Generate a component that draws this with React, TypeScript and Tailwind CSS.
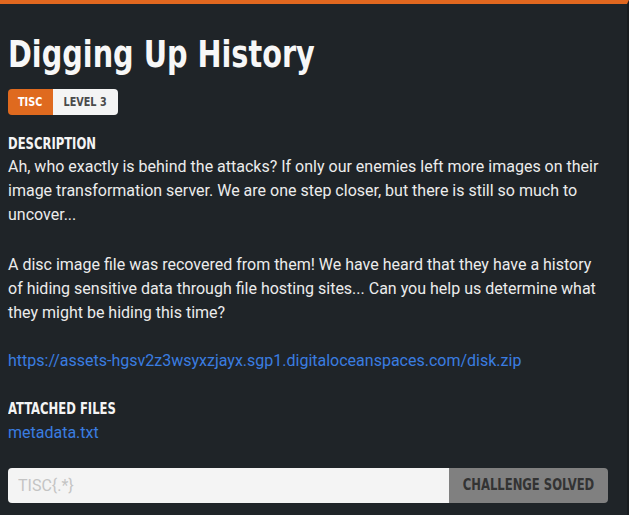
import React from "react";

const heading = "font-['DejaVu_Sans_Condensed','Liberation_Sans',sans-serif]";

// squeeze DejaVu Condensed a little so it reads like the site's narrow display face
const Narrow: React.FC<{ children: React.ReactNode; origin?: string }> = ({ children, origin = "origin-left" }) => (
  <span className={`inline-block ${origin} scale-x-[0.86] whitespace-nowrap`}>{children}</span>
);

const App: React.FC = () => {
  return (
    <div className="min-h-[515px] w-full bg-[#1f2428] border-t-4 border-[#e0671f] border-r-2 border-r-[#181c1f] text-[#f1f1f1] font-['Roboto',sans-serif]">
      <div className="w-[608px] pl-2 pt-[26px]">
        <h1 className={`${heading} text-[38px] leading-[48px] font-bold text-[#f7f7f7]`}>
          <span className="inline-block origin-left scale-x-[0.84] whitespace-nowrap">Digging Up History</span>
        </h1>
        <div className={`${heading} mt-[11px] inline-flex h-[26px] rounded overflow-hidden text-[12.5px] font-bold`}>
          <span className="flex w-[45px] items-center justify-center bg-[#df6a1f] text-white">
            <Narrow origin="origin-center">TISC</Narrow>
          </span>
          <span className="flex w-[65px] items-center justify-center bg-[#f4f4f4] text-[#4a4a4a]">
            <Narrow origin="origin-center">LEVEL 3</Narrow>
          </span>
        </div>

        <div className={`${heading} mt-[19px] text-[15px] leading-[21px] font-bold text-[#f4f4f4]`}>
          <Narrow>DESCRIPTION</Narrow>
        </div>
        <div className="text-[16px] leading-[24px] text-[#ececec]">
          <p>
            Ah, who exactly is behind the attacks? If only our enemies left more images on their image
            transformation server. We are one step closer, but there is still so much to uncover...
          </p>
          <p className="mt-[26px]">
            A disc image file was recovered from them! We have heard that they have a history of hiding
            sensitive data through file hosting sites... Can you help us determine what they might be
            hiding this time?
          </p>
          <p className="mt-6">
            <a className="text-[#3a7de0]" href="#">
              https://assets-hgsv2z3wsyxzjayx.sgp1.digitaloceanspaces.com/disk.zip
            </a>
          </p>
        </div>

        <div className={`${heading} mt-[25px] text-[15px] leading-[23px] font-bold text-[#f4f4f4]`}>
          <Narrow>ATTACHED FILES</Narrow>
        </div>
        <a className="block text-[16px] leading-[24px] text-[#3a7de0]" href="#">
          metadata.txt
        </a>

        <div className="mt-[23px] flex h-[35px]">
          <input
            className="flex-1 rounded-l bg-[#f4f4f4] px-[10px] text-[16px] text-[#333] placeholder:text-[#c4c4c4] outline-none"
            placeholder="TISC{.*}"
          />
          <button className={`${heading} flex w-[159px] items-center justify-center rounded-r bg-[#808080] text-[15px] font-bold text-[#333]`}>
            <Narrow origin="origin-center">CHALLENGE SOLVED</Narrow>
          </button>
        </div>
      </div>
    </div>
  );
};

export default App;
